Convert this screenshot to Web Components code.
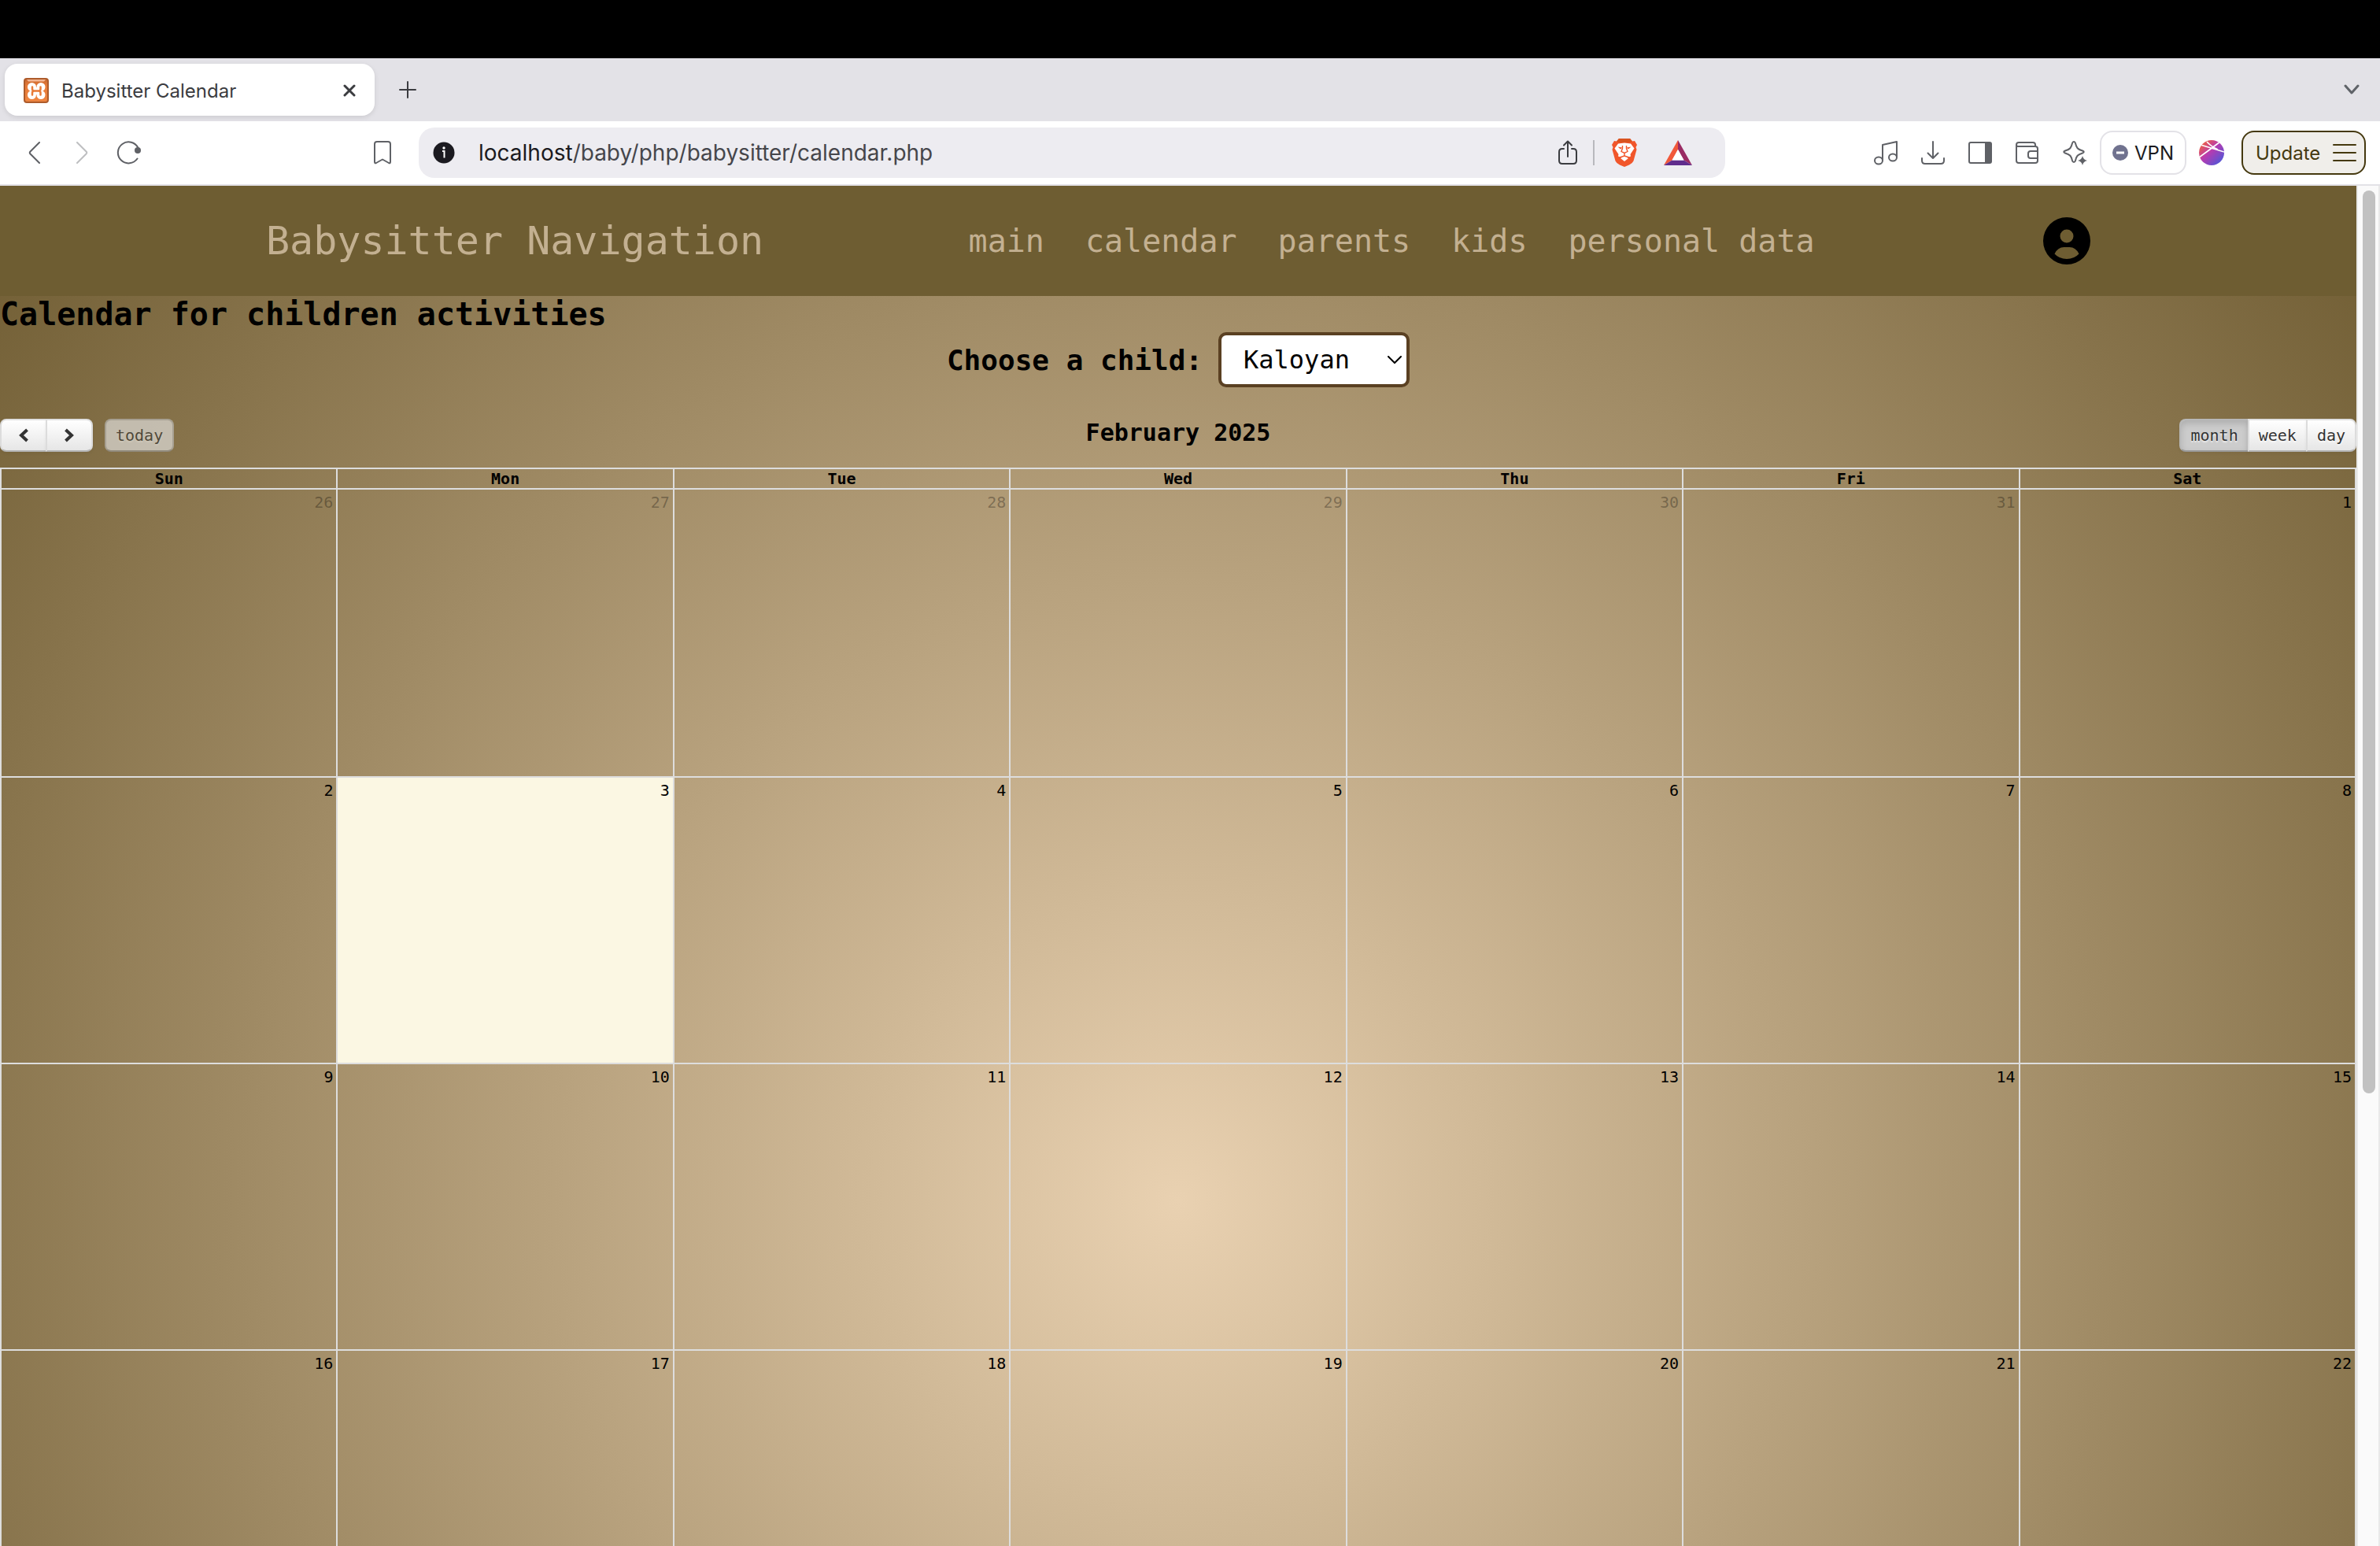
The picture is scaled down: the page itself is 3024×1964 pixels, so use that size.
<!DOCTYPE html>
<html lang="en">
<head>
<meta charset="utf-8">
<title>Babysitter Calendar</title>
<style>
html, body { height: 100%; margin: 0; }
body { overflow: hidden; background: #fff; font-family: Inter, "Open Sans", sans-serif; }
</style>
</head>
<body>
<browser-window>
  <browser-tabs slot="chrome">Babysitter Calendar</browser-tabs>
  <browser-toolbar slot="chrome"></browser-toolbar>
  <site-nav brand="Babysitter Navigation"></site-nav>
  <child-picker></child-picker>
  <activity-calendar></activity-calendar>
</browser-window>

<script>
const define = (name, html, setup) => {
  const template = document.createElement('template');
  template.innerHTML = html;
  customElements.define(name, class extends HTMLElement {
    constructor() {
      super();
      this.attachShadow({ mode: 'open' }).append(template.content.cloneNode(true));
    }
    connectedCallback() {
      if (setup && !this.ready) { this.ready = true; setup(this, this.shadowRoot); }
    }
  });
};

const line = (w, d, extra = '') => `<path fill="none" stroke="currentColor" stroke-width="${w}" stroke-linecap="round" stroke-linejoin="round" d="${d}" ${extra}/>`;
const ICONS = {
  xampp: [32, 32, `<defs><linearGradient id="g" x1="0" y1="0" x2="0" y2="1"><stop offset="0" stop-color="#c4652f"/><stop offset=".3" stop-color="#e87b38"/><stop offset="1" stop-color="#ee8541"/></linearGradient></defs>
    <rect x="1" y="1" width="30" height="30" rx="3" fill="url(#g)" stroke="#ad5b2b" stroke-width="2"/>
    <path d="M4 2h24l-2 2.500H6z" fill="#f3b592"/>
    <g fill="#fff"><circle cx="10.500" cy="11.500" r="5.500"/><circle cx="22" cy="11.500" r="5.500"/><circle cx="10.500" cy="21.500" r="5.500"/><circle cx="22" cy="21.500" r="5.500"/><path d="M8 12h16v9H8z"/></g>
    <path d="M11 11.500v2.500q0 2.500 2.500 2.500h5.500q2.500 0 2.500 2.500v2.500M21.500 11.500v2.500q0 2.500-2.500 2.500M11 21.500V19q0-2.500 2.500-2.500" fill="none" stroke="#e87b38" stroke-width="2.500" stroke-linecap="round"/>`],
  close: [16, 16, line(3, 'M2 2l12 12M14 2L2 14')],
  plus: [22, 22, line(2, 'M11 1v20M1 11h20')],
  expand: [20, 14, line(3, 'M2 2l8 9 8-9')],
  back: [16, 28, line(2, 'M14 1L2.500 12.500q-1.500 1.500 0 3L14 27')],
  forward: [16, 28, line(2, 'M2 1l11.500 11.500q1.500 1.500 0 3L2 27')],
  reload: [32, 30, line(2, 'M26.500 22.500A13.500 13.500 0 1 1 27.500 9') + '<circle cx="27" cy="12" r="4" fill="currentColor"/>'],
  bookmark: [24, 30, line(2, 'M2 4q0-3 3-3h14q3 0 3 3v22.500q0 2.500-2 1.500L12 23.500 4 28q-2 1-2-1.500z')],
  info: [28, 28, '<circle cx="14" cy="14" r="13.500" fill="#1b1a20"/><circle cx="14" cy="8" r="1.700" fill="#fff"/><path d="M12 12h2.500v8.500" fill="none" stroke="#fff" stroke-width="2"/>'],
  share: [24, 32, line(2, 'M7 11H5q-4 0-4 4v11q0 4 4 4h14q4 0 4-4V15q0-4-4-4h-2M12 21V2M7 6.500l5-5 5 5')],
  brave: [32, 36, `<path d="M9 0h14l3 3.500 3-.5 3 5-1.500 3 1 3-4 14.500Q26.500 31 22 33.500L16 36l-6-2.500Q5.500 31 4.500 28.500L.5 14l1-3L0 8l3-5 3 .5z" fill="#f1562b"/><path d="M9 0h14l3 3.500-3 1.500H9L6 3.500z" fill="#d9531f"/>
    <path d="M8 6.500l8-1 8 1 4.500 6-5 7.500.5 2.500-5 2-3-2-3 2-5-2 .5-2.500-5-7.500z" fill="#fff"/><path d="M16 22.500l5 2.500-5 4-5-4z" fill="#fff"/>
    <path d="M7.500 10.500l6 1-2.500 2zM24.500 10.500l-6 1 2.500 2z" fill="#f1562b"/><path d="M13.500 9v3.500l-1.500 4 4 2 4-2-1.500-4V9M16 18.500V22l-6 2M16 22l6 2" fill="none" stroke="#f1562b" stroke-width="1.400"/>`],
  triangle: [36, 32, '<path d="M18 0v12L10.500 25.500 0 32z" fill="#f1583a"/><path d="M18 0v12l7.500 13.500L36 32z" fill="#992b63"/><path d="M10.500 25.500h15L36 32H0z" fill="#5f2c8c"/><path d="M18 12l7.500 13.500h-15z" fill="#fff"/>'],
  music: [32, 32, line(2, 'M12 25.500V6L30 2v19.500') + '<g fill="none" stroke="currentColor" stroke-width="2"><ellipse cx="7" cy="26" rx="5" ry="4.500"/><ellipse cx="25" cy="22" rx="5" ry="4.500"/></g>'],
  download: [30, 30, line(2, 'M15 1v21M8.500 15.500l6.500 6.500 6.500-6.500M1 22v3q0 4 4 4h20q4 0 4-4v-3')],
  panel: [30, 28, line(2, 'M3 1h24q2 0 2 2v22q0 2-2 2H3q-2 0-2-2V3q0-2 2-2z') + '<path d="M21 1h8v26h-8z" fill="currentColor"/>'],
  wallet: [32, 28, line(2, 'M2 4v20q0 3 3 3h21q3 0 3-3V9q0-3-3-3H4q-2 0-2-2 0-3 3-3h18q3 0 3 3v2M29 12H20q-3 0-3 3v3q0 3 3 3h9')],
  sparkle: [32, 32, line(2, 'M15 2q1.500 0 2 2c1.500 6 2.500 7.500 9 9.500q3.500 1.500 0 3c-6.500 2-7.500 3.500-9 9.500q-.5 2-2 2t-2-2c-1.500-6-2.500-7.500-9-9.500q-3.500-1.500 0-3c6.500-2 7.500-3.500 9-9.500q.5-2 2-2z') + '<circle cx="26" cy="26" r="7" fill="#fff"/><path d="M26 20q1 5 6 6-5 1-6 6-1-5-6-6 5-1 6-6z" fill="currentColor"/>'],
  minus: [20, 20, '<circle cx="10" cy="10" r="10" fill="#70728f"/><path d="M5 10h10" stroke="#fff" stroke-width="3"/>'],
  globe: [32, 32, '<defs><linearGradient id="b" x1="0" y1="0" x2="1" y2="1"><stop offset=".1" stop-color="#f0603f"/><stop offset=".45" stop-color="#b83bb0"/><stop offset=".9" stop-color="#4f57d8"/></linearGradient><clipPath id="c"><circle cx="16" cy="16" r="16"/></clipPath></defs><circle cx="16" cy="16" r="16" fill="url(#b)"/><path clip-path="url(#c)" d="M0 22Q14 12 27 2M2 6l30 9M10 2q5 6 14 10" fill="none" stroke="#fff" stroke-width="1.600"/>'],
  menu: [30, 24, '<path d="M1 2h28M1 12h28M1 22h28" stroke="currentColor" stroke-width="2" stroke-linecap="round"/>'],
  account: [60, 60, '<path fill-rule="evenodd" d="M30 0a30 30 0 1 0 0 60 30 30 0 0 0 0-60zM30 15.500a8.500 8.500 0 1 1 0 17 8.500 8.500 0 0 1 0-17zM14.500 46.500q4-8.500 12-8.500h7q8 0 12 8.500-6 6.500-15.500 6.500t-15.500-6.500z"/>'],
  prev: [12, 18, '<path d="M10.500 2L3 9l7.500 7" fill="none" stroke="currentColor" stroke-width="4"/>'],
  next: [12, 18, '<path d="M1.500 2L9 9l-7.500 7" fill="none" stroke="currentColor" stroke-width="4"/>'],
  caret: [18, 10, line(2, 'M1 1l8 8 8-8')]
};
define('ui-icon', '<style>:host{display:inline-flex;flex:none}svg{display:block}</style>', (host, root) => {
  const [w, h, body] = ICONS[host.getAttribute('name')];
  root.innerHTML += `<svg width="${w}" height="${h}" viewBox="0 0 ${w} ${h}" aria-hidden="true">${body}</svg>`;
});

define('browser-window', `<style>
  :host { display: flex; flex-direction: column; height: 100vh; overflow: hidden; }
  .menubar { flex: none; height: 74px; background: #000; }
  .view { flex: 1; min-height: 0; display: flex; border-top: 2px solid #e3e2e7; }
  main { flex: 1; min-width: 0; overflow: hidden;
    background: radial-gradient(circle 1977px at 50% 1290px, #e9d1b1, #6f5c32);
    font-family: "DejaVu Sans Mono", monospace; color: #000; }
  .track { width: 16px; padding: 6px 4px 0 6px; border: solid #e9e9e9; border-width: 0 2px; background: #fafafa; }
  .thumb { height: 66.6%; border-radius: 8px; background: #c1c1c1; }
</style>
<div class="menubar"></div>
<slot name="chrome"></slot>
<div class="view"><main><slot></slot></main><div class="track"><div class="thumb"></div></div></div>`);

define('browser-tabs', `<style>
  :host { display: flex; align-items: center; height: 80px; flex: none; padding: 0 26px 0 6px; box-sizing: border-box; background: #e3e2e7; color: #3b3c40; }
  .tab { display: flex; align-items: center; gap: 16px; width: 470px; height: 66px; padding: 2px 24px 0; box-sizing: border-box; border-radius: 16px; background: #fff; box-shadow: 0 2px 6px #0000001a; font-size: 24px; }
  .title { flex: 1; white-space: nowrap; }
  button { display: flex; padding: 0; border: 0; background: none; color: inherit; }
  .new { margin-left: 31px; }
  .all { margin-left: auto; color: #5f6368; }
</style>
<div class="tab"><ui-icon name="xampp"></ui-icon><span class="title"><slot></slot></span><button aria-label="Close tab"><ui-icon name="close"></ui-icon></button></div>
<button class="new" aria-label="New tab"><ui-icon name="plus"></ui-icon></button>
<button class="all" aria-label="Search tabs"><ui-icon name="expand"></ui-icon></button>`);

define('browser-toolbar', `<style>
  :host { display: flex; align-items: center; height: 80px; flex: none; background: #fff; color: #5f6166; }
  button { display: flex; align-items: center; justify-content: center; width: 60px; height: 56px; padding: 0; border: 0; background: none; color: inherit; font: 24px Inter, sans-serif; }
  button:disabled { opacity: .4; }
  .left, .right { display: flex; align-items: center; box-sizing: border-box; }
  .left { width: 532px; padding: 0 16px 0 14px; }
  .mark { margin-left: auto; }
  .field { flex: 1; display: flex; align-items: center; height: 64px; padding: 0 42px 0 18px; box-sizing: border-box; border-radius: 20px; background: #edecf1; color: #3b3c40; }
  .url { flex: 1; margin-left: 30px; font-size: 28px; color: #46464b; text-decoration: none; white-space: nowrap; }
  .url b { font-weight: 400; color: #1b1a20; }
  .field button { width: 36px; }
  .sep { width: 2px; height: 32px; margin: 0 20px 0 14px; background: #b8b8bd; }
  .field .rewards { margin-left: 32px; }
  .right { width: 832px; justify-content: flex-end; padding-right: 18px; }
  .right .vpn { width: 110px; margin: 0 2px; gap: 8px; border: 2px solid #e3e2e7; border-radius: 16px; color: #1b1a20; }
  .right .update { width: 158px; margin-left: 8px; padding: 0 10px 0 16px; justify-content: space-between; border: 2px solid #45390f; border-radius: 16px; background: #f0eeea; color: #45390f; }
</style>
<div class="left">
  <button aria-label="Back"><ui-icon name="back"></ui-icon></button>
  <button aria-label="Forward" disabled><ui-icon name="forward"></ui-icon></button>
  <button aria-label="Reload"><ui-icon name="reload"></ui-icon></button>
  <button class="mark" aria-label="Bookmark"><ui-icon name="bookmark"></ui-icon></button>
</div>
<div class="field">
  <ui-icon name="info"></ui-icon>
  <a class="url" href="#"><b>localhost</b>/baby/php/babysitter/calendar.php</a>
  <button aria-label="Share"><ui-icon name="share"></ui-icon></button>
  <span class="sep"></span>
  <button aria-label="Shields"><ui-icon name="brave"></ui-icon></button>
  <button class="rewards" aria-label="Rewards"><ui-icon name="triangle"></ui-icon></button>
</div>
<div class="right">
  <button aria-label="Media"><ui-icon name="music"></ui-icon></button>
  <button aria-label="Downloads"><ui-icon name="download"></ui-icon></button>
  <button aria-label="Side panel"><ui-icon name="panel"></ui-icon></button>
  <button aria-label="Wallet"><ui-icon name="wallet"></ui-icon></button>
  <button aria-label="Assistant"><ui-icon name="sparkle"></ui-icon></button>
  <button class="vpn"><ui-icon name="minus"></ui-icon>VPN</button>
  <button aria-label="Profile"><ui-icon name="globe"></ui-icon></button>
  <button class="update">Update<ui-icon name="menu"></ui-icon></button>
</div>`);

define('site-nav', `<style>
  :host { display: block; background: #6e5d32; }
  nav { display: flex; align-items: center; justify-content: space-between; height: 140px; padding: 0 338px; }
  a { color: #c3b091; text-decoration: none; white-space: nowrap; }
  .brand { font-size: 50px; }
  .links { display: flex; gap: 52px; padding-right: 30px; font-size: 40px; }
  .user { display: flex; color: #000; }
</style>
<nav><a class="brand" href="#"></a>
<div class="links"><a href="#">main</a><a href="#">calendar</a><a href="#">parents</a><a href="#">kids</a><a href="#">personal data</a></div>
<a class="user" href="#" aria-label="Account"><ui-icon name="account"></ui-icon></a></nav>`,
(host, root) => { root.querySelector('.brand').textContent = host.getAttribute('brand'); });

define('child-picker', `<style>
  :host { display: block; font-weight: 700; }
  h2 { margin: 0; font-size: 40px; line-height: 46px; }
  form { display: flex; align-items: center; justify-content: center; gap: 20px; font-size: 36px; }
  .box { display: grid; align-items: center; }
  .box > * { grid-area: 1 / 1; }
  select { appearance: none; width: 243px; height: 70px; padding: 0 28px; border: 4px solid #5a4022; border-radius: 10px; background: #fff; color: #000; font: 32px "DejaVu Sans Mono", monospace; }
  ui-icon { justify-self: end; margin-right: 10px; color: #000; pointer-events: none; }
</style>
<h2>Calendar for children activities</h2>
<form><label for="child">Choose a child:</label><div class="box"><select id="child"><option>Kaloyan</option></select><ui-icon name="caret"></ui-icon></div></form>`);

define('activity-calendar', `<style>
  :host { display: block; margin-top: 40px; font-size: 20px; }
  header { display: grid; grid-template-columns: 1fr auto 1fr; align-items: start; margin-bottom: 20px; }
  h2 { margin: 0; font-size: 30px; line-height: 35px; }
  .group { display: flex; }
  .start { gap: 15px; }
  .end { justify-content: flex-end; }
  button { height: 42px; padding: 0 12px; border: 2px solid; border-color: #e0e0e0 #dcdcdc #b4b4b4; background: linear-gradient(#fff, #e6e6e6); color: #333; font: 20px "DejaVu Sans Mono", monospace; text-shadow: 0 2px 2px #ffffffbf; box-shadow: inset 0 2px 0 #fff3, 0 2px 4px #0000000d; }
  button + button { margin-left: -2px; }
  button:first-child { border-top-left-radius: 8px; border-bottom-left-radius: 8px; }
  button:last-child { border-top-right-radius: 8px; border-bottom-right-radius: 8px; }
  .arrow { display: flex; align-items: center; justify-content: center; width: 60px; }
  .active { background: #ccc; border-color: #b8b8b8 #b8b8b8 #999; box-shadow: inset 0 4px 8px #00000026, 0 2px 4px #0000000d; }
  button:disabled { background: #e6e6e6; border-color: #bbb #bbb #999; opacity: .65; box-shadow: none; }
  table { width: 100%; border-collapse: collapse; table-layout: fixed; }
  th, td { padding: 0; border: 2px solid #ddd; }
  th { line-height: 24px; }
  td { height: 364px; padding: 4px; box-sizing: border-box; text-align: right; vertical-align: top; }
  tbody tr:first-child td { height: 366px; }
  .other { color: #0000004d; }
  .today { background: #fbf7e3; }
</style>
<header>
  <div class="group start">
    <div class="group"><button class="arrow" aria-label="Previous"><ui-icon name="prev"></ui-icon></button><button class="arrow" aria-label="Next"><ui-icon name="next"></ui-icon></button></div>
    <div class="group"><button disabled>today</button></div>
  </div>
  <h2>February 2025</h2>
  <div class="group end"><button class="active">month</button><button>week</button><button>day</button></div>
</header>
<table><thead><tr></tr></thead><tbody></tbody></table>`,
(host, root) => {
  root.querySelector('thead tr').innerHTML = ['Sun', 'Mon', 'Tue', 'Wed', 'Thu', 'Fri', 'Sat'].map(d => `<th>${d}</th>`).join('');
  const date = new Date(2025, 0, 26);
  let rows = '';
  for (let week = 0; week < 4; week++) {
    rows += '<tr>';
    for (let day = 0; day < 7; day++) {
      const other = date.getMonth() !== 1;
      const today = !other && date.getDate() === 3;
      rows += `<td class="${other ? 'other' : today ? 'today' : ''}">${date.getDate()}</td>`;
      date.setDate(date.getDate() + 1);
    }
    rows += '</tr>';
  }
  root.querySelector('tbody').innerHTML = rows;
});
</script>
</body>
</html>
